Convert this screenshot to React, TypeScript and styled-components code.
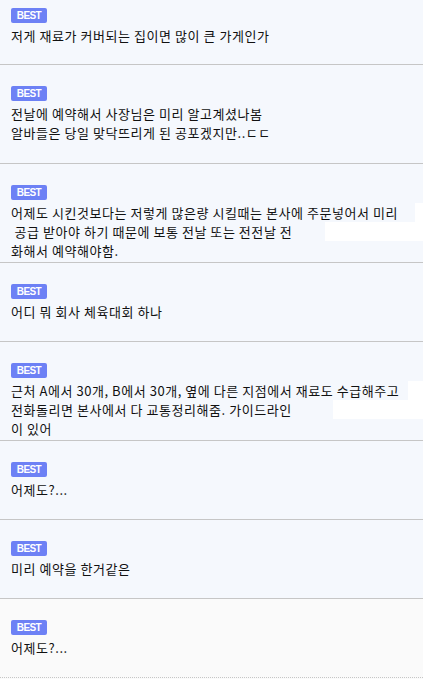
import styled, { createGlobalStyle } from "styled-components";

const GlobalStyle = createGlobalStyle`
  html, body {
    margin: 0;
    padding: 0;
    background: #fafafa;
  }
  body {
    font-family: "Noto Sans CJK KR", "Noto Sans", sans-serif;
  }
`;

const List = styled.ul`
  list-style: none;
  margin: 0;
  padding: 0;
  width: 423px;
`;

const Row = styled.li<{ $h: number; $top?: number; $last?: boolean }>`
  box-sizing: border-box;
  height: ${(p) => p.$h}px;
  padding: ${(p) => p.$top ?? 21}px 0 0 11px;
  background: ${(p) => (p.$last ? "#fafafa" : "#f5f8fd")};
  border-bottom: 1px ${(p) => (p.$last ? "dotted" : "solid")} #c6c6c6;
  overflow: hidden;
`;

const Badge = styled.span`
  display: block;
  width: 36px;
  height: 15px;
  margin-bottom: 3px;
  border-radius: 2px;
  background: #6d81f5;
  color: #fff;
  font-family: "Liberation Sans", Arial, sans-serif;
  font-weight: 700;
  font-size: 10px;
  line-height: 15px;
  letter-spacing: -0.6px;
  text-align: center;
`;

const Line = styled.div`
  display: flex;
  height: 19px;
  font-size: 13px;
  line-height: 19px;
  letter-spacing: 0.55px;
  color: #111;
  white-space: pre;
`;

// white blank strip trailing some lines in the capture
const Blank = styled.i<{ $w: number }>`
  flex: 0 0 ${(p) => p.$w}px;
  margin-left: auto;
  background: #fff;
`;

type Item = { lines: string[]; blanks?: (number | null)[]; h: number; top?: number };

const items: Item[] = [
  { lines: ["저게 재료가 커버되는 집이면 많이 큰 가게인가"], h: 65, top: 8 },
  {
    lines: ["전날에 예약해서 사장님은 미리 알고계셨나봄", "알바들은 당일 맞닥뜨리게 된 공포겠지만..ㄷㄷ"],
    h: 99,
  },
  {
    lines: [
      "어제도 시킨것보다는 저렇게 많은량 시킬때는 본사에 주문넣어서 미리",
      " 공급 받아야 하기 때문에 보통 전날 또는 전전날 전",
      "화해서 예약해야함.",
    ],
    blanks: [8, 98, null],
    h: 99,
  },
  { lines: ["어디 뭐 회사 체육대회 하나"], h: 79 },
  {
    lines: [
      "근처 A에서 30개, B에서 30개, 옆에 다른 지점에서 재료도 수급해주고",
      "전화돌리면 본사에서 다 교통정리해줌. 가이드라인",
      "이 있어",
    ],
    blanks: [15, 90, null],
    h: 99,
  },
  { lines: ["어제도?..."], h: 79 },
  { lines: ["미리 예약을 한거같은"], h: 79 },
  { lines: ["어제도?..."], h: 79 },
];

export default function App() {
  return (
    <>
      <GlobalStyle />
      <List>
        {items.map((it, i) => (
          <Row key={i} $h={it.h} $top={it.top} $last={i === items.length - 1}>
            <Badge>BEST</Badge>
            {it.lines.map((l, j) => {
              const w = it.blanks ? it.blanks[j] : null;
              return (
                <Line key={j}>
                  <span>{l}</span>
                  {w != null && <Blank $w={w} />}
                </Line>
              );
            })}
          </Row>
        ))}
      </List>
    </>
  );
}
